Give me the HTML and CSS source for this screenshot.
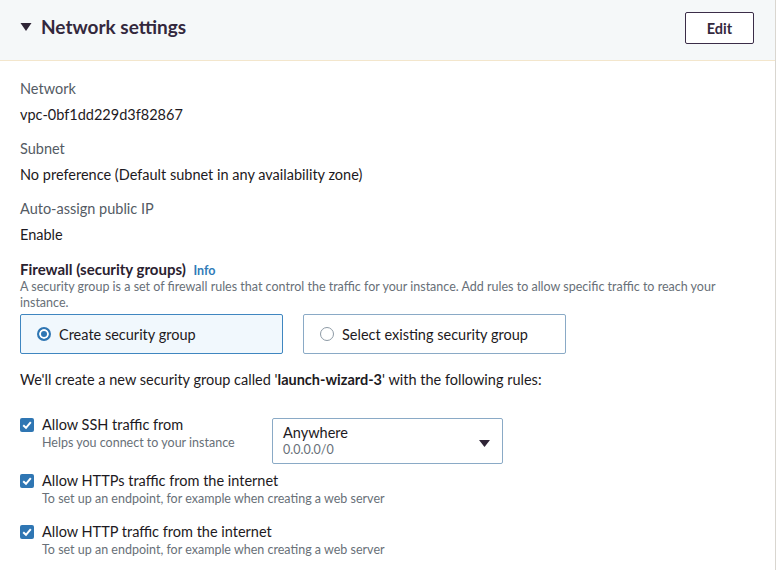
FILE: index.html
```html
<!DOCTYPE html>
<html>
<head>
<meta charset="utf-8">
<link rel="stylesheet" href="styles.css">
</head>
<body>
<div class="panel">
  <div class="header">
    <div class="title">
      <svg class="caret" width="12" height="10" viewBox="0 0 12 10"><path d="M0.5 1 L11.5 1 L6 9 Z" fill="#2f2536"/></svg>
      <h2>Network settings</h2>
    </div>
    <button class="btn">Edit</button>
  </div>
  <div class="body">
    <div class="kv">
      <div class="label">Network</div>
      <div class="value">vpc-0bf1dd229d3f82867</div>
    </div>
    <div class="kv">
      <div class="label">Subnet</div>
      <div class="value">No preference (Default subnet in any availability zone)</div>
    </div>
    <div class="kv">
      <div class="label">Auto-assign public IP</div>
      <div class="value">Enable</div>
    </div>
    <div class="fw">
      <div class="fw-title">Firewall (security groups) <a class="info">Info</a></div>
      <div class="fw-desc">A security group is a set of firewall rules that control the traffic for your instance. Add rules to allow specific traffic to reach your instance.</div>
      <div class="tiles">
        <div class="tile selected"><span class="radio on"></span>Create security group</div>
        <div class="tile"><span class="radio"></span>Select existing security group</div>
      </div>
    </div>
    <p class="note">We'll create a new security group called '<b>launch-wizard-3</b>' with the following rules:</p>
    <div class="rule r1">
      <div class="rule-left fixed">
        <span class="cb"><svg width="14" height="14" viewBox="0 0 14 14"><path d="M3.2 7.2 L6 9.8 L10.8 4.2" fill="none" stroke="#fff" stroke-width="2"/></svg></span>
        <div>
          <div class="rule-label">Allow SSH traffic from</div>
          <div class="rule-desc">Helps you connect to your instance</div>
        </div>
      </div>
      <div class="select">
        <div>
          <div class="sel-val">Anywhere</div>
          <div class="sel-sub">0.0.0.0/0</div>
        </div>
        <svg width="11" height="7" viewBox="0 0 11 7"><path d="M0 0 L11 0 L5.5 7 Z" fill="#2f2536"/></svg>
      </div>
    </div>
    <div class="rule r2">
      <div class="rule-left">
        <span class="cb"><svg width="14" height="14" viewBox="0 0 14 14"><path d="M3.2 7.2 L6 9.8 L10.8 4.2" fill="none" stroke="#fff" stroke-width="2"/></svg></span>
        <div>
          <div class="rule-label">Allow HTTPs traffic from the internet</div>
          <div class="rule-desc">To set up an endpoint, for example when creating a web server</div>
        </div>
      </div>
    </div>
    <div class="rule">
      <div class="rule-left">
        <span class="cb"><svg width="14" height="14" viewBox="0 0 14 14"><path d="M3.2 7.2 L6 9.8 L10.8 4.2" fill="none" stroke="#fff" stroke-width="2"/></svg></span>
        <div>
          <div class="rule-label">Allow HTTP traffic from the internet</div>
          <div class="rule-desc">To set up an endpoint, for example when creating a web server</div>
        </div>
      </div>
    </div>
  </div>
</div>
</body>
</html>
```
FILE: styles.css
```css
* { box-sizing: border-box; }
html, body { margin: 0; padding: 0; background: #fff; }
body {
  font-family: Lato, "Liberation Sans", sans-serif;
  font-size: 14.5px;
  color: #1d1a22;
  width: 776px;
  height: 570px;
  overflow: hidden;
}
.panel {
  width: 776px;
  height: 570px;
  border-right: 1px solid #d9d6d0;
}
.header {
  height: 61px;
  padding: 12px 21px 0 20px;
  display: flex;
  align-items: flex-start;
  justify-content: space-between;
  background: #f5f8f9;
  border-bottom: 1px solid #f3e6cc;
}
.title { display: flex; align-items: center; gap: 9px; height: 30px; }
.caret { display: block; }
.title h2 {
  margin: 0;
  font-size: 19px;
  line-height: 24px;
  font-weight: 700;
  color: #33283d;
}
.btn {
  width: 69px;
  height: 32px;
  border: 1px solid #3b2d48;
  border-radius: 2px;
  background: #fff;
  font-family: inherit;
  font-size: 14.5px;
  font-weight: 700;
  color: #33283d;
}
.body { padding: 18px 20px 0 20px; }
.kv { margin-bottom: 14px; }
.label { line-height: 20px; color: #545b64; margin-bottom: 6px; }
.value { line-height: 20px; color: #1d1a22; }
.fw-title { height: 20px; line-height: 20px; font-size: 15px; font-weight: 700; color: #2a2230; }
.info { font-size: 12.5px; font-weight: 700; color: #2f7bb8; margin-left: 4px; }
.fw-desc { font-size: 12.5px; line-height: 16px; color: #687078; padding-right: 30px; }
.tiles { display: flex; gap: 20px; margin-top: 3px; }
.tile {
  width: 263px;
  height: 40px;
  display: flex;
  align-items: center;
  gap: 8px;
  padding-left: 16px;
  border: 1px solid #8aaac6;
  border-radius: 2px;
  background: #fff;
}
.tile.selected { background: #f1f8fd; border-color: #3f86c0; }
.radio {
  width: 14px; height: 14px;
  border-radius: 50%;
  border: 1px solid #8d9aa5;
  background: #fff;
  flex: none;
}
.radio.on {
  border: 2px solid #2f76b3;
  background: #2f76b3;
  box-shadow: inset 0 0 0 2px #fff;
}
.note { margin: 16px 0 0 0; line-height: 20px; }
.note b { font-weight: 700; }
.rule { display: flex; align-items: flex-start; margin-top: 15px; }
.rule.r1 { margin-top: 25px; height: 41px; }
.rule-left { flex: 1; display: flex; gap: 8px; align-items: flex-start; }
.rule-left.fixed { flex: none; width: 252px; }
.cb {
  width: 14px; height: 14px;
  margin-top: 3px;
  border-radius: 2px;
  background: #2f76b3;
  flex: none;
  display: block;
}
.cb svg { display: block; }
.rule-label { line-height: 20px; }
.rule-desc { font-size: 12.5px; line-height: 16px; color: #687078; }
.select {
  margin-top: 3px;
  width: 231px;
  height: 46px;
  border: 1px solid #8aaac6;
  border-radius: 2px;
  display: flex;
  align-items: center;
  justify-content: space-between;
  padding: 0 12px 0 10px;
}
.sel-val { line-height: 18px; }
.sel-sub { font-size: 12.5px; line-height: 16px; color: #687078; }
.select svg { margin-top: 4px; }
```
